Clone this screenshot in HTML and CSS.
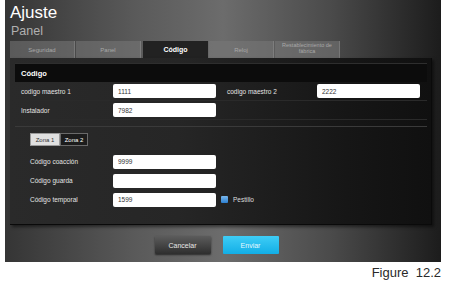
FILE: index.html
```html
<!DOCTYPE html>
<html>
<head>
<meta charset="utf-8">
<link rel="stylesheet" href="styles.css">
</head>
<body>
<div class="screen">
  <div class="title">Ajuste</div>
  <div class="subtitle">Panel</div>
  <div class="tabs">
    <div class="tab">Seguridad</div>
    <div class="tab">Panel</div>
    <div class="tab active">Código</div>
    <div class="tab">Reloj</div>
    <div class="tab two">Restablecimiento de<br>fábrica</div>
  </div>
  <div class="panel">
    <div class="section-head">Código</div>
    <div class="row">
      <span class="label">codigo maestro 1</span>
      <span class="input">1111</span>
      <span class="label label2">codigo maestro 2</span>
      <span class="input">2222</span>
    </div>
    <div class="row">
      <span class="label">Instalador</span>
      <span class="input">7982</span>
    </div>
    <div class="divider"></div>
    <div class="zones">
      <div class="zone on">Zona 1</div>
      <div class="zone">Zona 2</div>
    </div>
    <div class="zrow">
      <span class="zlabel">Código coacción</span>
      <span class="input">9999</span>
    </div>
    <div class="zrow">
      <span class="zlabel">Código guarda</span>
      <span class="input"></span>
    </div>
    <div class="zrow">
      <span class="zlabel">Código temporal</span>
      <span class="input">1599</span>
      <span class="check"></span>
      <span class="checklabel">Pestillo</span>
    </div>
  </div>
  <div class="footer">
    <div class="btn cancel">Cancelar</div>
    <div class="btn send">Enviar</div>
  </div>
</div>
<div class="caption">Figure&nbsp; 12.2</div>
</body>
</html>
```

FILE: styles.css
```css
* { box-sizing: border-box; }
html, body { margin: 0; padding: 0; background: #fff; }
body { font-family: "Liberation Sans", Arial, sans-serif; width: 450px; height: 286px; overflow: hidden; }

.screen {
  margin-left: 5px;
  width: 436px;
  height: 262px;
  padding-top: 3px;
  background: linear-gradient(to right, #353535 0%, #5a5a5a 30%, #6c6c6c 50%, #4a4a4a 75%, #1c1c1c 100%);
  display: flex;
  flex-direction: column;
}
.title { color: #fff; font-size: 17px; line-height: 20px; padding-left: 5px; }
.subtitle { color: #b0b0b0; font-size: 12.5px; line-height: 16px; padding-left: 6px; }
.tabs { display: flex; margin-top: 2px; padding-left: 5px; height: 17px; }
.tab {
  width: 65px;
  margin-right: 1px;
  background: rgba(120,120,120,0.55);
  border-right: 1px solid rgba(160,160,160,0.35);
  color: #a8a8a8;
  font-size: 6px;
  display: flex; align-items: center; justify-content: center; text-align: center;
  line-height: 6px;
}
.tab.active { background: #222; color: #fff; font-weight: bold; font-size: 7px; border-right: none; margin-left: 1px; }
.tab.two { font-size: 5.5px; line-height: 6px; align-items: flex-start; padding-top: 1px; }

.panel {
  margin-left: 5px;
  width: 422px;
  height: 167px;
  background: linear-gradient(to right, #2a2a2a 0%, #262626 40%, #161616 80%, #101010 100%);
  border-right: 1px solid #0a0a0a;
  border-bottom: 1px solid #0a0a0a;
  padding: 5px 4px 0 5px;
  box-shadow: 2px 2px 3px rgba(0,0,0,0.5);
}
.section-head {
  height: 19px;
  background: #0c0c0c;
  border-top: 1px solid #2e2e2e;
  color: #fff; font-weight: bold; font-size: 7.5px;
  display: flex; align-items: center; padding-left: 6px;
}
.row {
  height: 19px;
  display: flex; align-items: center;
  border-bottom: 1px solid #2a2a2a;
  padding-left: 6px;
}
.label { width: 92px; color: #e4e4e4; font-size: 6.5px; }
.label2 { margin-left: 11px; width: 90px; }
.input {
  width: 103px; height: 14px;
  background: #fff;
  border-radius: 2px;
  color: #333; font-size: 6.5px;
  display: flex; align-items: center; padding-left: 5px;
}
.divider { height: 7px; border-bottom: 1px solid #3a3a3a; margin-bottom: 6px; }
.zones { display: flex; margin-left: 15px; height: 13px; }
.zone {
  width: 28px; color: #fff; font-size: 6px;
  border: 1px solid #6a6a6a; background: #1c1c1c;
  display: flex; align-items: center; justify-content: center;
}
.zone.on { background: #e0e0e0; color: #333; width: 30px; border-color: #9a9a9a; }
.zrow { height: 19px; display: flex; align-items: center; padding-left: 15px; }
.zrow:first-of-type { }
.zones + .zrow { margin-top: 6px; }
.zlabel { width: 83px; color: #e4e4e4; font-size: 6.5px; }
.check {
  width: 7px; height: 7px; margin-left: 5px;
  background: linear-gradient(#7ab8ee, #2c7fd0);
  border-radius: 1px;
}
.checklabel { color: #ddd; font-size: 6.5px; margin-left: 5px; }

.footer {
  flex: 1;
  display: flex; justify-content: center; align-items: center; gap: 12px;
  padding-right: 13px;
  padding-top: 3px;
}
.btn {
  width: 56px; height: 18px;
  display: flex; align-items: center; justify-content: center;
  font-size: 7px; color: #fff; border-radius: 1px;
}
.cancel { background: linear-gradient(#5c5c5c, #2e2e2e); box-shadow: 0 1px 2px rgba(0,0,0,0.6); color: #e8e8e8; }
.send { background: linear-gradient(#3fcdf6, #12aee6); color: #e6f8ff; }

.caption {
  color: #2a2a2a;
  font-size: 13px;
  line-height: 16px;
  text-align: right;
  padding-right: 9px;
  margin-top: 3px;
}
```
